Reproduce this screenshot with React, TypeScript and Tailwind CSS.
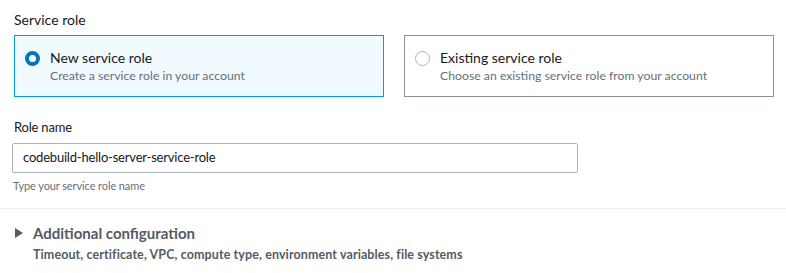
import React from "react";

export default function App() {
  return (
    <div className="w-[786px] h-[273px] bg-white overflow-hidden" style={{ fontFamily: "Lato, 'Liberation Sans', sans-serif" }}>
      <div className="pl-[14px] pr-[12px] pt-[10px]">
        <div className="text-[14px] leading-[20px] text-[#16191f]">Service role</div>
        <div className="grid grid-cols-2 gap-[20px] mt-[5px]">
          <div className="h-[62px] border border-[#00a1c9] bg-[#f1faff] flex items-start pl-[10px] pt-[13px]">
            <div className="mt-[2px] w-[15px] h-[15px] rounded-full border-[4px] border-[#0073bb] bg-white shrink-0" />
            <div className="ml-[10px]">
              <div className="text-[14px] leading-[18px] text-[#16191f]">New service role</div>
              <div className="text-[12.25px] leading-[16px] text-[#687078] mt-[1px]">Create a service role in your account</div>
            </div>
          </div>
          <div className="h-[62px] border border-[#879596] bg-white flex items-start pl-[10px] pt-[13px]">
            <div className="mt-[2px] w-[15px] h-[15px] rounded-full border border-[#aab7b8] bg-white shrink-0" />
            <div className="ml-[10px]">
              <div className="text-[14px] leading-[18px] text-[#16191f]">Existing service role</div>
              <div className="text-[12.25px] leading-[16px] text-[#687078] mt-[1px]">Choose an existing service role from your account</div>
            </div>
          </div>
        </div>
        <div className="mt-[20px] text-[13px] tracking-[-0.2px] leading-[20px] text-[#16191f]">Role name</div>
        <div className="mt-[6px] ml-[-2px] w-[566px] h-[30px] border border-[#aab7b8] rounded-[2px] flex items-center pl-[10px] text-[13px] tracking-[-0.2px] text-[#16191f]">
          codebuild-hello-server-service-role
        </div>
        <div className="mt-[5px] ml-[-1px] text-[11px] tracking-[-0.1px] leading-[16px] text-[#687078]">Type your service role name</div>
      </div>
      <div className="mt-[14px] h-px bg-[#eaeded]" />
      <div className="pl-[15px] pt-[15px]">
        <div className="flex items-center">
          <svg width="8" height="10" viewBox="0 0 8 10" className="shrink-0">
            <path d="M0 0 L8 5 L0 10 Z" fill="#545b64" />
          </svg>
          <div className="ml-[10px] text-[15px] leading-[18px] font-bold text-[#545b64]">Additional configuration</div>
        </div>
        <div className="ml-[18px] mt-[5px] text-[12.5px] tracking-[0.1px] leading-[16px] font-bold text-[#545b64]">
          Timeout, certificate, VPC, compute type, environment variables, file systems
        </div>
      </div>
    </div>
  );
}
